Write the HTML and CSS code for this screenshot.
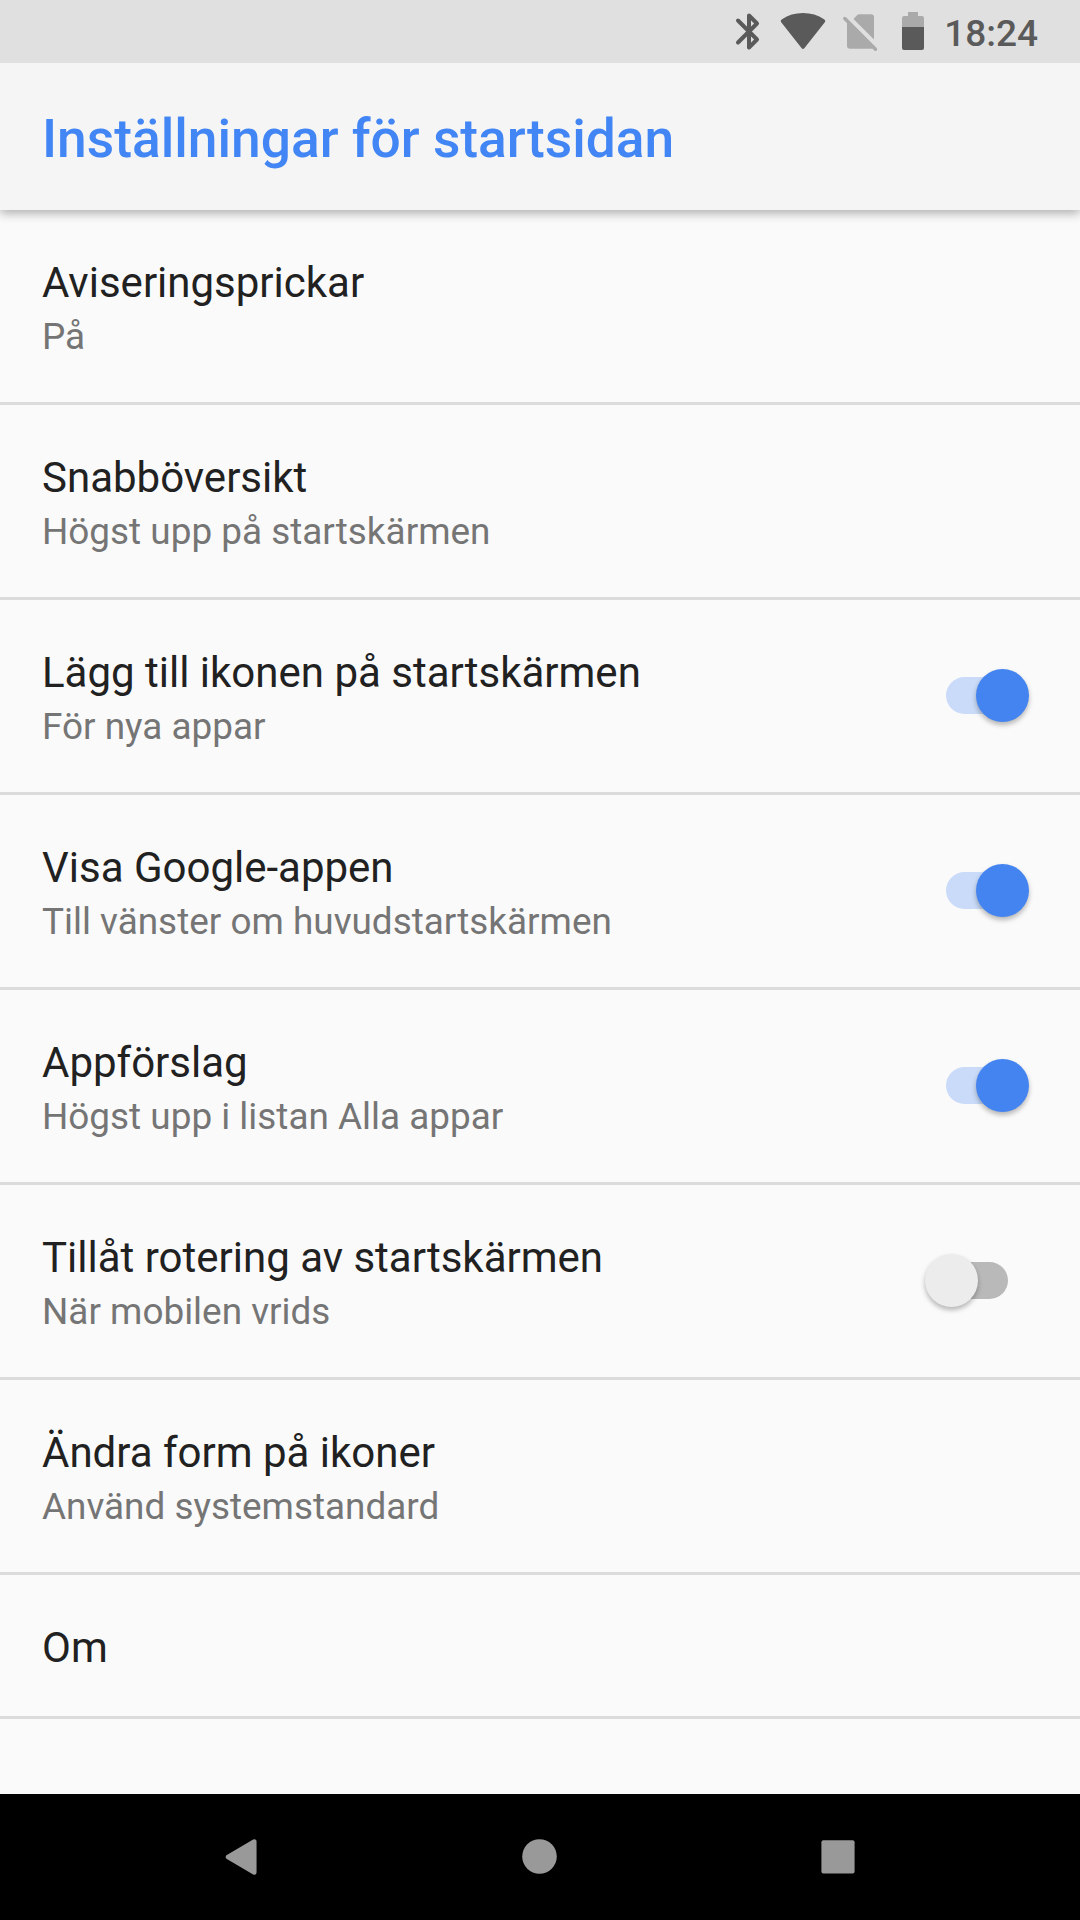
FILE: index.html
```html
<!DOCTYPE html>
<html lang="sv">
<head>
    <meta charset="UTF-8">
    <meta name="viewport" content="width=device-width, initial-scale=1.0">
    <title>Inställningar för startsidan</title>
    <link rel="stylesheet" href="styles.css">
</head>
<body>
    <div class="status-bar">
        <svg class="status-icons" width="192" height="63" viewBox="734 0 192 63">
            <!-- bluetooth -->
            <path d="M738 20.5 L757 39.5 L749 47.5 V15.5 L757 23.5 L738 42.5" fill="none" stroke="#5a5a5a" stroke-width="4" stroke-linecap="round" stroke-linejoin="round"/>
            <!-- wifi -->
            <path d="M781 22 Q780 20.5 782 19.3 Q791 13 803 13 Q815 13 824 19.3 Q826 20.5 825 22 L804.5 48 Q803 50 801.5 48 Z" fill="#5a5a5a"/>
            <!-- no sim -->
            <path d="M853.5 19 L857 15.3 Q858 14.3 859.5 14.3 H871 Q874 14.3 874 17.3 V39.5 Z M847 22 L873.5 48.3 Q872.6 48.7 871 48.7 H850 Q847 48.7 847 45.7 Z" fill="#aaaaaa"/>
            <path d="M844.8 18.5 L875.5 49.3" fill="none" stroke="#aaaaaa" stroke-width="3.4" stroke-linecap="round"/>
            <!-- battery -->
            <path d="M902 27 V18 Q902 16 904 16 H908 V12 H918 V16 H922 Q924 16 924 18 V27 Z" fill="#aaaaaa"/>
            <path d="M902 27 H924 V48 Q924 50 922 50 H904 Q902 50 902 48 Z" fill="#5a5a5a"/>
        </svg>
        <span class="clock">18:24</span>
    </div>
    <header class="header">
        <h1>Inställningar för startsidan</h1>
    </header>
    <main class="settings">
        <div class="row">
            <div class="text">
                <div class="title">Aviseringsprickar</div>
                <div class="summary">På</div>
            </div>
        </div>
        <div class="row">
            <div class="text">
                <div class="title">Snabböversikt</div>
                <div class="summary">Högst upp på startskärmen</div>
            </div>
        </div>
        <div class="row">
            <div class="text">
                <div class="title">Lägg till ikonen på startskärmen</div>
                <div class="summary">För nya appar</div>
            </div>
            <div class="switch on"><div class="thumb"></div></div>
        </div>
        <div class="row">
            <div class="text">
                <div class="title">Visa Google-appen</div>
                <div class="summary">Till vänster om huvudstartskärmen</div>
            </div>
            <div class="switch on"><div class="thumb"></div></div>
        </div>
        <div class="row">
            <div class="text">
                <div class="title">Appförslag</div>
                <div class="summary">Högst upp i listan Alla appar</div>
            </div>
            <div class="switch on"><div class="thumb"></div></div>
        </div>
        <div class="row">
            <div class="text">
                <div class="title">Tillåt rotering av startskärmen</div>
                <div class="summary">När mobilen vrids</div>
            </div>
            <div class="switch"><div class="thumb"></div></div>
        </div>
        <div class="row">
            <div class="text">
                <div class="title">Ändra form på ikoner</div>
                <div class="summary">Använd systemstandard</div>
            </div>
        </div>
        <div class="row single">
            <div class="text">
                <div class="title">Om</div>
            </div>
        </div>
    </main>
    <nav class="nav-bar">
        <svg width="36" height="38" viewBox="0 0 36 38">
            <path d="M5 19 L31.3 3.5 V34.5 Z" fill="#999" stroke="#999" stroke-width="4.5" stroke-linejoin="round"/>
        </svg>
        <svg width="36" height="38" viewBox="0 0 36 38">
            <circle cx="17.5" cy="18.5" r="17.3" fill="#999"/>
        </svg>
        <svg width="36" height="38" viewBox="0 0 36 38">
            <rect x="0.4" y="2.3" width="33.2" height="33.2" rx="2" fill="#999"/>
        </svg>
    </nav>
</body>
</html>
```
FILE: styles.css
```css
* {
    box-sizing: border-box;
}

body {
    margin: 0;
    height: 1920px;
    display: flex;
    flex-direction: column;
    overflow: hidden;
    font-family: Roboto, sans-serif;
    background-color: #fafafa;
}

.status-bar {
    height: 63px;
    flex-shrink: 0;
    display: flex;
    justify-content: flex-end;
    padding-right: 42px;
    background-color: #e0e0e0;
    z-index: 2;
}

.status-icons {
    margin-right: 18px;
}

.clock {
    font-size: 37px;
    font-weight: 500;
    line-height: 43px;
    padding-top: 12px;
    color: #5a5a5a;
}

.header {
    height: 147px;
    flex-shrink: 0;
    display: flex;
    align-items: center;
    padding: 4px 42px 0;
    background-color: #f5f5f5;
    box-shadow: 0 3px 10px rgba(0, 0, 0, 0.32);
    z-index: 1;
}

h1 {
    margin: 0;
    font-size: 53.3px;
    font-weight: 500;
    line-height: 62px;
    color: #4285f4;
}

.settings {
    flex: 1;
}

.row {
    height: 195px;
    display: flex;
    justify-content: space-between;
    padding: 48px 51px 0 42px;
    border-bottom: 3px solid #dbdbdb;
}

.row.single {
    height: 144px;
}

.title {
    font-size: 42px;
    line-height: 49px;
    color: #212121;
}

.summary {
    margin-top: 8px;
    font-size: 36.9px;
    line-height: 43px;
    color: #757575;
}

.switch {
    width: 62px;
    height: 37px;
    margin: 29px 21px 0;
    display: flex;
    align-items: center;
    border-radius: 19px;
    background-color: #b9b9b9;
}

/* thumb sticks out past the end of the track */
.thumb {
    width: 53px;
    height: 53px;
    flex-shrink: 0;
    margin: -8px -21px;
    border-radius: 50%;
    background-color: #ececec;
    box-shadow: 0 3px 5px rgba(0, 0, 0, 0.28);
}

.switch.on {
    justify-content: flex-end;
    background-color: #c9dbf8;
}

.switch.on .thumb {
    background-color: #4484f0;
}

.nav-bar {
    height: 126px;
    flex-shrink: 0;
    display: flex;
    justify-content: space-between;
    align-items: center;
    padding: 0 223px;
    background-color: #000;
}
```
